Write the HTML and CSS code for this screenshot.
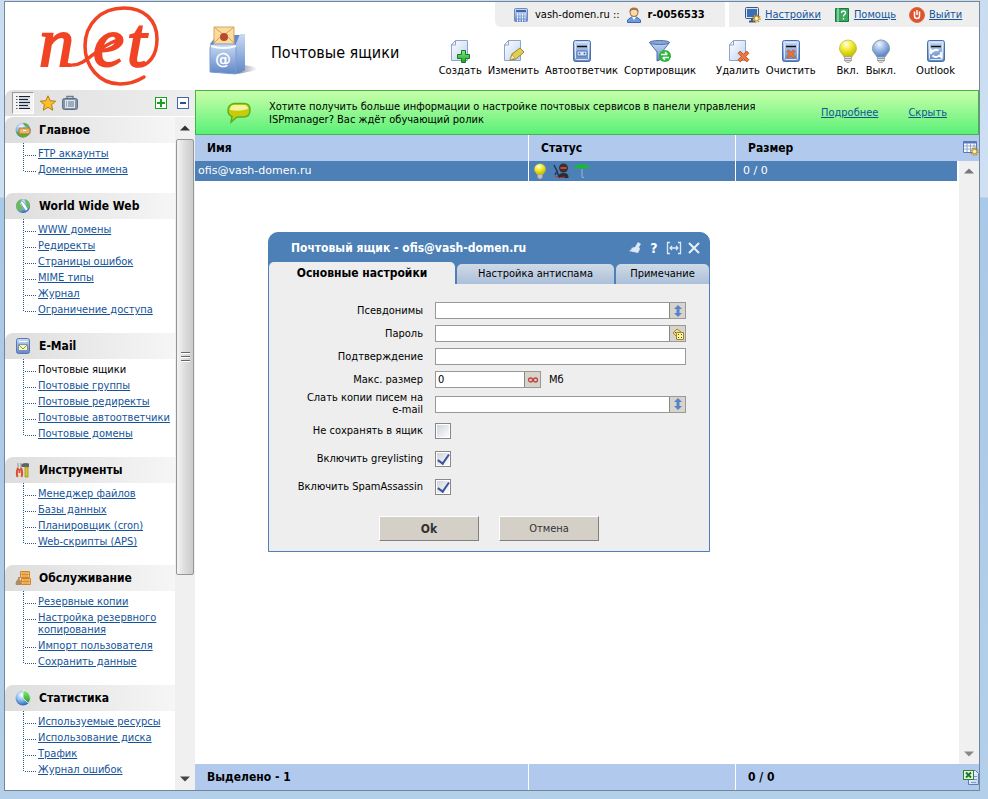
FILE: index.html
```html
<!DOCTYPE html>
<html lang="ru">
<head>
    <meta charset="UTF-8">
    <meta name="viewport" content="width=device-width, initial-scale=1.0">
    <title>Почтовые ящики</title>
    <link rel="stylesheet" href="styles.css">
</head>
<body>

<!-- shared icons -->
<svg class="sprite" width="0" height="0" aria-hidden="true">
    <defs>
        <linearGradient id="blue" x1="0" y1="0" x2="0" y2="1"><stop offset="0" stop-color="#c9dbf5"/><stop offset="1" stop-color="#5f86c6"/></linearGradient>
        <linearGradient id="paper" x1="0" y1="0" x2="1" y2="1"><stop offset="0" stop-color="#ffffff"/><stop offset="1" stop-color="#bcd2f0"/></linearGradient>
        <linearGradient id="green" x1="0" y1="0" x2="0" y2="1"><stop offset="0" stop-color="#8dea7c"/><stop offset="1" stop-color="#1d9c2c"/></linearGradient>
        <linearGradient id="shade" x1="0" y1="0" x2="1" y2="0"><stop offset="0" stop-color="#8a8f9c"/><stop offset="1" stop-color="#ffffff"/></linearGradient>
        <radialGradient id="yellow" cx=".4" cy=".25" r=".7"><stop offset="0" stop-color="#fffff0"/><stop offset=".45" stop-color="#f4ee3a"/><stop offset="1" stop-color="#c9bd00"/></radialGradient>
        <radialGradient id="bluebulb" cx=".4" cy=".25" r=".7"><stop offset="0" stop-color="#f2f7ff"/><stop offset=".45" stop-color="#a5c0ea"/><stop offset="1" stop-color="#5f86c4"/></radialGradient>
        <radialGradient id="globe" cx=".4" cy=".3" r=".7"><stop offset="0" stop-color="#ffffff"/><stop offset=".5" stop-color="#8dbcf0"/><stop offset="1" stop-color="#2f68b4"/></radialGradient>
    </defs>
    <symbol id="i-page" viewBox="0 0 24 24">
        <path d="M7.500 1.500H19.500V21.500H3.500V6z" fill="url(#paper)" stroke="#8ba5cf"/>
        <path d="M7.500 1.500V6H3.500z" fill="#fff" stroke="#8ba5cf"/>
    </symbol>
    <symbol id="i-box" viewBox="0 0 24 24">
        <rect x="3.500" y="1.500" width="17" height="21" rx="2" fill="url(#blue)" stroke="#4a6ea8"/>
        <rect x="5.500" y="3.500" width="13" height="17" rx="1" fill="none" stroke="#dbe7fa"/>
        <path d="M7 7.500H17" stroke="#111" stroke-width="1.500"/>
    </symbol>
    <symbol id="i-bulb" viewBox="0 0 24 24">
        <path d="M12 1a8.500 8.500 0 0 0-8.500 8.500c0 4 3 5 4.500 8.500h8c1.500-3.500 4.500-4.500 4.500-8.500A8.500 8.500 0 0 0 12 1z" fill="url(#yellow)" stroke="#b8b43a" stroke-width=".7"/>
        <path d="M8.500 17.500h7v4l-2 2h-3l-2-2z" fill="#e2e2e2" stroke="#8c8c8c" stroke-width=".6"/><path d="M8.500 19.500h7M8.500 21.500h7" stroke="#888" stroke-width=".8"/>
    </symbol>
    <symbol id="i-cross" viewBox="0 0 12 12">
        <path d="M3 1l3 3 3-3 2 2-3 3 3 3-2 2-3-3-3 3-2-2 3-3-3-3z" fill="#f07838" stroke="#b8431a" stroke-width=".8"/>
    </symbol>
    <symbol id="i-updown" viewBox="0 0 12 12">
        <path d="M6 0l4 4H7.500v4H10l-4 4-4-4h2.500V4H2z" fill="#5484cc"/>
    </symbol>
    <symbol id="i-gear" viewBox="0 0 10 10">
        <circle cx="5" cy="5" r="4" fill="none" stroke="#b98d25" stroke-width="1.600" stroke-dasharray="1.600 1.500"/>
        <circle cx="5" cy="5" r="2.700" fill="#f8df83" stroke="#b98d25"/><circle cx="5" cy="5" r="1" fill="#fff"/>
    </symbol>
</svg>

<div class="window">
    <header class="header">
        <a class="logo" href="#" aria-label="net">
            <svg width="124" height="84" viewBox="0 0 124 84">
                <text class="logo-text" x="2" y="62">n</text>
                <text class="logo-text" x="56" y="62">e</text>
                <text class="logo-text" x="90" y="62">t</text>
                <path d="M107 73C99 78 91 80 83 80 62 80 48 62 48 42 48 20 64 4 87 4c20 0 33 12 33 31 0 16-8 28-21 27M36 61c13 0 22-16 42-24" fill="none" stroke="#f04424" stroke-width="3.500" stroke-linecap="round"/>
            </svg>
        </a>
        <svg class="title-icon" width="48" height="52" viewBox="0 0 48 52">
            <path d="M29 48l19-4-2-3-11-2z" fill="url(#shade)"/>
            <path d="M1 18L8 9H36V44L28 48z" fill="#5f8bce"/>
            <path d="M26 20L31 8H36V44L27 48z" fill="url(#blue)"/>
            <path d="M5 1H25V20H5z" fill="#fbdc9c" stroke="#d9a45a"/>
            <path d="M5 1l10 8L25 1M5 17l8-8M25 17l-8-8" fill="none" stroke="#d9a45a"/>
            <circle cx="15" cy="11" r="4" fill="#b84a30"/>
            <path d="M1 22Q1 18 5 18H24Q27 18 27 22V48L1 46z" fill="url(#blue)" stroke="#7c9cd0"/>
            <path d="M2 20Q14 24 27 20" stroke="#fff" stroke-width="2" fill="none"/>
            <text class="at" x="14" y="39" text-anchor="middle">@</text>
        </svg>
        <h1>Почтовые ящики</h1>
        <div class="header-right">
            <div class="top-row">
                <div class="panel user">
                    <svg width="16" height="16" viewBox="0 0 16 16"><rect x="1.500" y="1.500" width="13" height="13" rx="1" fill="url(#blue)" stroke="#6a8cc4"/><rect x="3" y="3" width="10" height="2" fill="#47659a"/><path d="M4.500 6.500v8M7 6.500v8M9.500 6.500v8M12 6.500v8" stroke="#fff" stroke-dasharray="2 1"/></svg>
                    <span>vash-domen.ru ::</span>
                    <svg width="16" height="16" viewBox="0 0 16 16"><path d="M1.500 15.500V13l4-3h5l4 3v2.500z" fill="#6e9be0" stroke="#3d69ad"/><path d="M6 10l2 3 2-3z" fill="#fff"/><circle cx="8" cy="5.500" r="4" fill="#fbd9ae" stroke="#9a6c3c"/><path d="M3.500 5Q3 .5 8 .5T12.500 5L10 3H6z" fill="#a9743f"/></svg>
                    <b>r-0056533</b>
                </div>
                <nav class="panel links">
                    <svg width="16" height="16" viewBox="0 0 16 16"><rect x=".5" y=".5" width="13" height="11" rx="1" fill="#dce6f2" stroke="#3b5a82"/><rect x="2" y="2" width="10" height="8" fill="#3a6fb6"/><path d="M4 14.500h6M7 12v2" stroke="#3b5a82" stroke-width="2"/><use href="#i-gear" x="7" y="7" width="9" height="9"/></svg>
                    <a href="#">Настройки</a>
                    <svg width="16" height="16" viewBox="0 0 16 16"><path d="M1.500 1.500h13v13h-13z" fill="#3aa860" stroke="#167a3c"/><path d="M4 1v14" stroke="#c8efd2"/><path d="M7.500 6q0-2 2-2t2 2q0 1-1 1.500t-1 2M9.500 11v1.500" fill="none" stroke="#fff" stroke-width="1.300"/></svg>
                    <a href="#">Помощь</a>
                    <svg width="16" height="16" viewBox="0 0 16 16"><circle cx="8" cy="8" r="7.500" fill="#e4502c" stroke="#cf7340"/><path d="M5.500 4.500v4.500q0 2.500 2.500 2.500t2.500-2.500V4.500M8 3v5" fill="none" stroke="#fff" stroke-width="1.500"/></svg>
                    <a href="#">Выйти</a>
                </nav>
            </div>
            <div class="toolbar">
                <div class="tools">
                    <button type="button"><svg viewBox="0 0 24 24"><use href="#i-page"/><path d="M13.500 11.500h4v4h4v4h-4v4h-4v-4h-4v-4h4z" fill="url(#green)" stroke="#118022"/></svg>Создать</button>
                    <button type="button"><svg viewBox="0 0 24 24"><use href="#i-page"/><path d="M9 21l2-6 8-6 4 4-8 7z" fill="#e2cd50" stroke="#9c862a"/><path d="M9 21l2-5 3 3z" fill="#f6e8c0" stroke="#9c862a" stroke-width=".5"/></svg>Изменить</button>
                    <button type="button"><svg viewBox="0 0 24 24"><use href="#i-box"/><rect x="7" y="12" width="10" height="5" rx="1" fill="#dce8fa" stroke="#4a6ea8"/><circle cx="9.500" cy="14.500" r="1" fill="#4a6ea8"/><circle cx="14.500" cy="14.500" r="1" fill="#4a6ea8"/></svg>Автоответчик</button>
                    <button type="button"><svg viewBox="0 0 24 24"><path d="M1.500 3.500L9 13v9l5-2v-7l7.500-9.500z" fill="url(#blue)" stroke="#4e72ac"/><ellipse cx="11.500" cy="3.500" rx="10" ry="2" fill="#86a5d8" stroke="#4e72ac"/><circle cx="17" cy="17" r="6" fill="#27b83a"/><path d="M13 15.500h6M17 13l2.500 2.500M21 18.500h-6M17 21l-2.500-2.500" stroke="#fff" stroke-width="1.300"/></svg>Сортировщик</button>
                </div>
                <div class="tools">
                    <button type="button"><svg viewBox="0 0 24 24"><use href="#i-page"/><use href="#i-cross" x="11" y="11" width="13" height="13"/></svg>Удалить</button>
                    <button type="button"><svg viewBox="0 0 24 24"><use href="#i-box"/><use href="#i-cross" x="7" y="10" width="10" height="10"/></svg>Очистить</button>
                </div>
                <div class="tools">
                    <button type="button"><svg viewBox="0 0 24 24"><use href="#i-bulb"/></svg>Вкл.</button>
                    <button type="button"><svg viewBox="0 0 24 24"><use href="#i-bulb"/><path d="M12 1a8.500 8.500 0 0 0-8.500 8.500c0 4 3 5 4.500 8.500h8c1.500-3.500 4.500-4.500 4.500-8.500A8.500 8.500 0 0 0 12 1z" fill="url(#bluebulb)" stroke="#7d9bcd" stroke-width=".8"/></svg>Выкл.</button>
                </div>
                <div class="tools">
                    <button type="button"><svg viewBox="0 0 24 24"><use href="#i-box"/><path d="M7 15v-4l1.500 1.500q3-3 6-1M17 13v5l-1.500-1.500q-4 3-7 0" fill="none" stroke="#fff" stroke-width="1.800"/></svg>Outlook</button>
                </div>
            </div>
        </div>
    </header>

    <div class="content">
        <aside class="sidebar">
            <div class="side-tools">
                <button type="button" class="pressed" aria-label="Список"><svg width="16" height="16" viewBox="0 0 16 16"><path d="M4 1.500h11M4 4.500h9M4 7.500h11M4 10.500h9M4 13.500h11" stroke="#222"/><path d="M4 3h11M4 6h11M4 9h11M4 12h11" stroke="#9fb4d8"/><path d="M1 1.500h1.500M1 4.500h1.500M1 7.500h1.500M1 10.500h1.500M1 13.500h1.500" stroke="#555"/></svg></button>
                <button type="button" aria-label="Избранное"><svg width="18" height="16" viewBox="0 0 18 16"><path d="M9 .8l2.200 4.900 5.500.5-4.200 3.500 1.300 5.500L9 12.300l-4.800 2.900 1.300-5.500L1.300 6.200l5.500-.5z" fill="#f8c02c" stroke="#b87a10"/></svg></button>
                <button type="button" aria-label="Портфель"><svg width="16" height="16" viewBox="0 0 16 16"><path d="M5 4V1.500h6V4" fill="none" stroke="#6d7f96" stroke-width="1.500"/><rect x=".5" y="3.500" width="15" height="11" rx="2" fill="#8093ab" stroke="#5f7188"/><rect x="3" y="5" width="10" height="8" fill="#dfe6ee"/><path d="M4 7h1M6 7h6M4 9h1M6 9h6M4 11h1M6 11h6" stroke="#60718a"/></svg></button>
                <span class="spacer"></span>
                <button type="button" aria-label="Развернуть все"><svg width="12" height="12" viewBox="0 0 12 12"><rect x=".5" y=".5" width="11" height="11" fill="#fff" stroke="#18a020"/><path d="M6 2v8M2 6h8" stroke="#18a020" stroke-width="2"/></svg></button>
                <button type="button" aria-label="Свернуть все"><svg width="12" height="12" viewBox="0 0 12 12"><rect x=".5" y=".5" width="11" height="11" fill="#fff" stroke="#4468b0"/><path d="M3 6h6" stroke="#2c4f98" stroke-width="2"/></svg></button>
            </div>
            <div class="side-body">
                <nav class="menu">
                    <section>
                        <h2><svg width="16" height="16" viewBox="0 0 16 16"><circle cx="8" cy="8" r="7.500" fill="url(#globe)"/><path d="M1 10q3 5 7 5.500 5-.5 7-5.500zM8 1q5 0 6 4l-4-1z" fill="#5cb02c"/><rect x="4" y="6" width="11" height="6" rx="1" fill="#e8b66c" stroke="#a8702c"/><path d="M8 8.500h3" stroke="#fff"/></svg>Главное</h2>
                        <ul>
                            <li><a href="#">FTP аккаунты</a></li>
                            <li><a href="#">Доменные имена</a></li>
                        </ul>
                    </section>
                    <section>
                        <h2><svg width="16" height="16" viewBox="0 0 16 16"><circle cx="8" cy="8" r="7" fill="url(#globe)"/><path d="M1 7q1-5 6-6L5 6l3 3-2 5Q1 12 1 7zM10 1q5 2 5 7l-3 4-1-6z" fill="#6cb85c"/><path d="M5 4l2-1 3 3 3 5-2 2-3-4z" fill="#fff" stroke="#5f93c8" stroke-width=".7"/></svg>World Wide Web</h2>
                        <ul>
                            <li><a href="#">WWW домены</a></li>
                            <li><a href="#">Редиректы</a></li>
                            <li><a href="#">Страницы ошибок</a></li>
                            <li><a href="#">MIME типы</a></li>
                            <li><a href="#">Журнал</a></li>
                            <li><a href="#">Ограничение доступа</a></li>
                        </ul>
                    </section>
                    <section>
                        <h2><svg width="16" height="16" viewBox="0 0 16 16"><rect x="1.500" y=".5" width="13" height="15" rx="2" fill="url(#blue)" stroke="#5577b4"/><path d="M4 3.500h8" stroke="#fff"/><path d="M3.500 6.500h9v6h-9z" fill="#f6f4c0" stroke="#7b93b8"/><path d="M4 7l4 4 4-4" fill="none" stroke="#8c9a30"/></svg>E-Mail</h2>
                        <ul>
                            <li><span>Почтовые ящики</span></li>
                            <li><a href="#">Почтовые группы</a></li>
                            <li><a href="#">Почтовые редиректы</a></li>
                            <li><a href="#">Почтовые автоответчики</a></li>
                            <li><a href="#">Почтовые домены</a></li>
                        </ul>
                    </section>
                    <section>
                        <h2><svg width="16" height="16" viewBox="0 0 16 16"><path d="M3 1v6M6 1v6" stroke="#98a0a8" stroke-width="1.200"/><path d="M3 6q-2 4-.5 9M6 6q2 4 .5 9M4.500 7v4" fill="none" stroke="#e04c2c" stroke-width="2"/><path d="M6 3q2-3 8-1.500V5H7z" fill="#5c636c"/><path d="M10 5h3v10h-3z" fill="#d8c82c" stroke="#948414" stroke-width=".7"/></svg>Инструменты</h2>
                        <ul>
                            <li><a href="#">Менеджер файлов</a></li>
                            <li><a href="#">Базы данных</a></li>
                            <li><a href="#">Планировщик (cron)</a></li>
                            <li><a href="#">Web-скрипты (APS)</a></li>
                        </ul>
                    </section>
                    <section>
                        <h2><svg width="16" height="16" viewBox="0 0 16 16"><path d="M5.500 1.500h9v6h-9zM6.500 8.500h9v6h-9z" fill="#f9c46c" stroke="#cf842c"/><path d="M8 2v5M10 2v5M12 2v5M9 9v5M11 9v5M13 9v5M5 4.500h9M6 11.500h9" stroke="#cf842c" stroke-width=".7"/><path d="M3 7h2l-.5 2q3 3 1.500 6H1q-1.500-3 2-6z" fill="#b08a60"/></svg>Обслуживание</h2>
                        <ul>
                            <li><a href="#">Резервные копии</a></li>
                            <li><a href="#">Настройка резервного копирования</a></li>
                            <li><a href="#">Импорт пользователя</a></li>
                            <li><a href="#">Сохранить данные</a></li>
                        </ul>
                    </section>
                    <section>
                        <h2><svg width="16" height="16" viewBox="0 0 16 16"><circle cx="8" cy="8" r="7.500" fill="url(#globe)"/><path d="M8 8V.5A7.500 7.500 0 0 1 13.300 13.300z" fill="url(#green)" stroke="#fff" stroke-width=".7"/></svg>Статистика</h2>
                        <ul>
                            <li><a href="#">Используемые ресурсы</a></li>
                            <li><a href="#">Использование диска</a></li>
                            <li><a href="#">Трафик</a></li>
                            <li><a href="#">Журнал ошибок</a></li>
                        </ul>
                    </section>
                </nav>
                <div class="scrollbar">
                    <svg width="10" height="6" viewBox="0 0 10 6"><path d="M0 5.500L5 .5l5 5z" fill="#333"/></svg>
                    <div class="thumb"><i></i></div>
                    <svg width="10" height="6" viewBox="0 0 10 6"><path d="M0 .5h10l-5 5z" fill="#444"/></svg>
                </div>
            </div>
        </aside>

        <main class="main">
            <div class="banner">
                <svg width="24" height="22" viewBox="0 0 24 22"><path d="M7 1.500h10q6 0 6 6.500t-6 7H10l-6 5 1-5.500Q1 13 1 8t6-6.500z" fill="#c6cc0c" stroke="#5fae20" stroke-width="1.500"/><path d="M7 3h10q4 0 4 4-8 3-18 1 0-5 4-5z" fill="#f4f59a"/></svg>
                <p>Хотите получить больше информации о настройке почтовых сервисов в панели управления ISPmanager? Вас ждёт обучающий ролик</p>
                <a href="#">Подробнее</a>
                <a href="#">Скрыть</a>
            </div>
            <table class="list">
                <colgroup><col class="c-name"><col class="c-status"><col><col class="c-side"></colgroup>
                <thead>
                    <tr>
                        <th>Имя</th>
                        <th>Статус</th>
                        <th>Размер</th>
                        <td><svg width="16" height="16" viewBox="0 0 16 16"><path d="M.5 1.500h13v11H.5z" fill="#fff" stroke="#5878b8"/><path d="M0 2.500h14" stroke="#5878b8" stroke-width="2"/><path d="M4 3v9M7.500 3v9M11 3v9M1 6h12M1 9h12" stroke="#8ba5d4"/><use href="#i-gear" x="7" y="7" width="9" height="9"/></svg></td>
                    </tr>
                </thead>
                <tbody>
                    <tr class="selected">
                        <td>ofis@vash-domen.ru</td>
                        <td>
                            <div class="states">
                                <svg width="16" height="16" viewBox="0 0 24 24"><use href="#i-bulb"/></svg>
                                <svg width="16" height="16" viewBox="0 0 16 16"><path d="M1 2l3 6-2 4M4 8l2 6" fill="none" stroke="#26384e" stroke-width="1.500"/><circle cx="10.500" cy="5" r="4.500" fill="#333"/><path d="M7.500 4h6v2h-6z" fill="#e03c2c"/><path d="M5 15q0-5 5.500-5t5 5z" fill="#2c2c30"/><path d="M2 13q4 3 10 1" stroke="#b03c3c" fill="none"/></svg>
                                <svg width="16" height="16" viewBox="0 0 16 16"><path d="M0 6q1-5 8-5t8 5l-3-1-2.500 1L8 5 5.500 6 3 5z" fill="#20b43c"/><path d="M8 6v8q1 1.500 2 0" fill="none" stroke="#9cb8dc"/></svg>
                            </div>
                        </td>
                        <td>0 / 0</td>
                        <td class="track up"><svg width="10" height="6" viewBox="0 0 10 6"><path d="M0 5.500L5 .5l5 5z" fill="#777"/></svg></td>
                    </tr>
                    <tr class="rest">
                        <td colspan="3"></td>
                        <td class="track down"><svg width="10" height="6" viewBox="0 0 10 6"><path d="M0 .5h10l-5 5z" fill="#888"/></svg></td>
                    </tr>
                </tbody>
                <tfoot>
                    <tr>
                        <td>Выделено - 1</td>
                        <td></td>
                        <td>0 / 0</td>
                        <td><svg width="16" height="16" viewBox="0 0 16 16"><path d="M5.500 1.500h7l3 3v11h-10z" fill="url(#paper)" stroke="#5c7cb8"/><path d="M8 13.500h5M11 7.500h3M11 10.500h3" stroke="#7c98cc"/><rect x=".5" y="1.500" width="10" height="9" fill="#e4f2e0" stroke="#2c8430"/><path d="M3 3.500l5 5M8 3.500l-5 5" stroke="#1c7424" stroke-width="1.800"/></svg></td>
                    </tr>
                </tfoot>
            </table>
        </main>
    </div>

    <form class="dialog">
        <div class="dialog-title">
            <strong>Почтовый ящик - ofis@vash-domen.ru</strong>
            <button type="button" aria-label="Закрепить"><svg width="14" height="14" viewBox="0 0 14 14"><path d="M10 1l3 2-2 3 1 2-2 4-9-2 3-2-1-1 4-1z" fill="#dce8f6"/></svg></button>
            <button type="button" class="help" aria-label="Справка">?</button>
            <button type="button" aria-label="Ширина"><svg width="16" height="14" viewBox="0 0 16 14"><path d="M4 1.500H1.500v11H4M12 1.500h2.500v11H12M4 7h8M6 5L4 7l2 2M10 5l2 2-2 2" fill="none" stroke="#dce8f6" stroke-width="1.300"/></svg></button>
            <button type="button" aria-label="Закрыть"><svg width="14" height="14" viewBox="0 0 14 14"><path d="M2 2l10 10M12 2L2 12" stroke="#e8f0fa" stroke-width="2"/></svg></button>
        </div>
        <div class="tabs">
            <button type="button" class="tab active">Основные настройки</button>
            <button type="button" class="tab wide">Настройка антиспама</button>
            <button type="button" class="tab">Примечание</button>
        </div>
        <div class="dialog-body">
            <div class="row">
                <label for="aliases">Псевдонимы</label>
                <div class="field"><input type="text" id="aliases" autofocus><button type="button" aria-label="Развернуть"><svg width="12" height="12"><use href="#i-updown"/></svg></button></div>
            </div>
            <div class="row">
                <label for="password">Пароль</label>
                <div class="field"><input type="password" id="password"><button type="button" aria-label="Сгенерировать"><svg width="12" height="12" viewBox="0 0 12 12"><path d="M1 5l4-4 4 3-4 5z" fill="#f4e284" stroke="#9c8430"/><path d="M4.500 4.500h7v7h-7z" fill="#fbf2a0" stroke="#9c8430"/><path d="M6 6.500h1M9 6.500h1M6 9.500h1M9 9.500h1M3 4.500h1" stroke="#5c4c10"/></svg></button></div>
            </div>
            <div class="row">
                <label for="confirm">Подтверждение</label>
                <div class="field"><input type="password" id="confirm"></div>
            </div>
            <div class="row">
                <label for="quota">Макс. размер</label>
                <div class="field"><input type="text" id="quota" value="0"><button type="button" aria-label="Без ограничений"><svg width="12" height="12" viewBox="0 0 12 12"><circle cx="3.500" cy="6" r="2" fill="none" stroke="#c04444" stroke-width="1.300"/><circle cx="8.500" cy="6" r="2" fill="none" stroke="#c04444" stroke-width="1.300"/></svg></button></div>
                <span class="unit">Мб</span>
            </div>
            <div class="row copies">
                <label for="copies">Слать копии писем на e-mail</label>
                <div class="field"><input type="text" id="copies"><button type="button" aria-label="Развернуть"><svg width="12" height="12"><use href="#i-updown"/></svg></button></div>
            </div>
            <div class="row check">
                <label for="nosave">Не сохранять в ящик</label>
                <input type="checkbox" id="nosave">
            </div>
            <div class="row check">
                <label for="grey">Включить greylisting</label>
                <input type="checkbox" id="grey" checked>
            </div>
            <div class="row check">
                <label for="spam">Включить SpamAssassin</label>
                <input type="checkbox" id="spam" checked>
            </div>
            <div class="buttons">
                <button type="submit" class="ok">Ok</button>
                <button type="button">Отмена</button>
            </div>
        </div>
    </form>
</div>

</body>
</html>
```
FILE: styles.css
```css
* {
    box-sizing: border-box;
    margin: 0;
    padding: 0;
}
body {
    display: flex;
    min-height: 100vh;
    padding: 1px 8px 8px 4px;
    background: linear-gradient(#c9dcf0 0, #cfe0f3 197px, #a9c9e8 198px, #b3cfea 100%);
    font-family: "DejaVu Sans Condensed", "DejaVu Sans", sans-serif;
    font-size: 11px;
    line-height: 12px;
    color: #000;
}
button, input {
    font: inherit;
    color: inherit;
}
button {
    border: 0;
    background: none;
    cursor: pointer;
}
svg {
    display: block;
    flex: none;
}
a {
    color: #15549a;
}
.sprite {
    position: absolute;
}
.window {
    position: relative;
    flex: 1;
    display: flex;
    flex-direction: column;
    background: #fff;
    border: 1px solid #74869a;
}

/* header */
.header {
    display: flex;
    height: 88px;
}
.logo {
    width: 204px;
    padding: 2px 0 0 32px;
}
.logo svg {
    overflow: visible;
}
.logo-text {
    font-family: "Liberation Serif", serif;
    font-style: italic;
    font-size: 70px;
    fill: #f04424;
    stroke: #f04424;
    stroke-width: 2px;
}
.title-icon {
    margin-top: 24px;
}
.at {
    font-family: "DejaVu Sans", sans-serif;
    font-size: 16px;
    font-weight: bold;
    fill: #fff;
}
h1 {
    margin: 39px 0 0 14px;
    font-size: 16px;
    line-height: 24px;
    font-weight: normal;
    white-space: nowrap;
}
.header-right {
    flex: 1;
    display: flex;
    flex-direction: column;
    align-items: flex-end;
}
.top-row {
    display: flex;
    gap: 4px;
}
.panel {
    display: flex;
    align-items: center;
    gap: 5px;
    height: 25px;
    background: #eee;
}
.user {
    width: 230px;
    padding-left: 18px;
    gap: 6px;
    border-bottom-left-radius: 6px;
}
.links {
    width: 250px;
    padding-left: 16px;
    gap: 4px;
}
.links a + svg {
    margin-left: 9px;
}
.toolbar {
    display: flex;
    gap: 20px;
    padding: 12px 24px 0 0;
}
.tools {
    display: flex;
    gap: 6px;
}
.tools button {
    display: flex;
    flex-direction: column;
    align-items: center;
    gap: 2px;
    font-family: "DejaVu Sans", sans-serif;
    font-size: 10px;
}
.tools svg {
    width: 24px;
    height: 24px;
}

.content {
    flex: 1;
    display: flex;
}

/* left menu */
.sidebar {
    width: 190px;
    display: flex;
    flex-direction: column;
}
.side-tools {
    display: flex;
    align-items: center;
    gap: 5px;
    height: 26px;
    padding: 0 6px 0 7px;
    border-radius: 8px 0 0 0;
    background: linear-gradient(to right, #dfdfdf, #eee);
}
.side-tools .spacer {
    flex: 1;
}
.side-tools button:last-child {
    margin-left: 5px;
}
.side-tools .pressed {
    padding: 2px;
    border: 1px solid #999;
    border-right-color: #fff;
    border-bottom-color: #fff;
    background: #f4f4f4;
}
.side-body {
    flex: 1;
    display: flex;
    padding-top: 1px;
}
.menu {
    flex: 1;
}
.menu h2 {
    display: flex;
    align-items: center;
    gap: 8px;
    height: 26px;
    padding-left: 10px;
    border-top-left-radius: 8px;
    background: linear-gradient(to right, #ddd, #f6f6f6);
    font-size: 12px;
}
.menu ul {
    list-style: none;
    margin-bottom: 15px;
    padding-top: 3px;
    background: repeating-linear-gradient(#2a5a8a 0 1px, transparent 1px 2px) 18px 0 / 1px 3px no-repeat;
}
.menu section:last-child ul {
    margin-bottom: 0;
}
/* dotted tree lines: trunk and branch */
.menu li {
    padding: 2px 0 2px 33px;
    background:
        repeating-linear-gradient(#2a5a8a 0 1px, transparent 1px 2px) 18px 0 / 1px 100% no-repeat,
        repeating-linear-gradient(to right, #2a5a8a 0 1px, transparent 1px 2px) 20px 9px / 11px 1px no-repeat;
}
.menu li:last-child {
    background-size: 1px 10px, 11px 1px;
}
.scrollbar {
    width: 20px;
    display: flex;
    flex-direction: column;
    align-items: center;
    padding: 8px 1px;
    background: #f0f0f0;
}
.thumb {
    width: 18px;
    height: 436px;
    margin: 8px 0 auto;
    display: flex;
    align-items: center;
    justify-content: center;
    border: 1px solid #959595;
    border-radius: 2px;
    background: linear-gradient(to right, #f4f4f4, #dcdcdc 50%, #cbcbcf);
}
.thumb i {
    width: 9px;
    height: 10px;
    background: repeating-linear-gradient(#666 0 1px, #fff 1px 2px, transparent 2px 4px);
}

/* right side */
.main {
    flex: 1;
    display: flex;
    flex-direction: column;
}
.banner {
    display: flex;
    align-items: center;
    height: 45px;
    padding: 0 31px;
    border: 1px solid #46b446;
    background: linear-gradient(#c8ffa8, #5af078);
    line-height: 13px;
}
.banner p {
    width: 490px;
    margin: 0 auto 0 18px;
}
.banner a + a {
    margin-left: 30px;
}
.list {
    flex: 1;
    width: 100%;
    border-collapse: separate;
    border-spacing: 0;
    table-layout: fixed;
    text-align: left;
}
.c-name {
    width: 334px;
}
.c-status {
    width: 207px;
}
.c-side {
    width: 22px;
}
.list thead tr, .list tfoot tr {
    height: 26px;
    background: #b0c9ed;
    font-size: 12px;
    font-weight: bold;
}
.list th, .list tfoot td {
    padding-left: 12px;
}
.list thead td, .list tfoot td:last-child {
    padding-left: 6px;
}
.list th:nth-child(-n+2), .selected td:nth-child(-n+2), .list tfoot td:nth-child(-n+2) {
    border-right: 1px solid #fff;
}
.selected {
    height: 20px;
    font-family: "DejaVu Sans", sans-serif;
    color: #fff;
}
.selected td {
    padding-left: 3px;
    background: #4c80b6;
}
.selected td:nth-child(3) {
    padding-left: 7px;
}
.states {
    display: flex;
    gap: 5px;
}
.list .track {
    padding: 7px 5px;
    border-left: 2px solid #fff;
    background: #f0f0f0;
}
.track.up {
    vertical-align: top;
}
.track.down {
    vertical-align: bottom;
}

/* mailbox dialog */
.dialog {
    position: absolute;
    left: 263px;
    top: 230px;
    width: 442px;
    border: 1px solid #4c80b6;
    border-radius: 10px 10px 0 0;
    background: #4c80b6;
}
.dialog-title {
    display: flex;
    align-items: center;
    gap: 5px;
    height: 29px;
    padding: 0 8px 0 22px;
    color: #fff;
    font-size: 12px;
}
.dialog-title strong {
    flex: 1;
}
.help {
    width: 14px;
    font-size: 14px;
    font-weight: bold;
}
.tabs {
    display: flex;
    align-items: flex-end;
    gap: 2px;
}
.tab {
    height: 20px;
    flex: 93;
    border-radius: 5px 5px 0 0;
    background: linear-gradient(#d0dae6, #abc0da);
}
.tab.wide {
    flex: 157;
}
.tab.active {
    flex: 186;
    height: 22px;
    background: #eee;
    font-size: 12px;
    font-weight: bold;
}
.dialog-body {
    padding: 15px 23px 10px 0;
    background: #eee;
}
.row {
    display: grid;
    grid-template-columns: 154px 1fr;
    column-gap: 12px;
    align-items: center;
    height: 23px;
}
.row:has(.unit) {
    grid-template-columns: 154px 106px 1fr;
}
.row .unit {
    margin-left: -4px;
}
.row.copies {
    height: 26px;
}
.row.check {
    height: 28px;
}
.row label {
    text-align: right;
}
.copies label {
    padding-left: 34px;
}
.field {
    display: flex;
    height: 17px;
    border: 1px solid #999;
    background: #fff;
}
.field input {
    flex: 1;
    min-width: 0;
    padding-left: 2px;
    border: 0;
    outline: 0;
    background: none;
}
.field button {
    width: 16px;
    display: flex;
    align-items: center;
    justify-content: center;
    border-left: 1px solid #888;
    background: #d8d4cc;
}
.row input[type=checkbox] {
    appearance: none;
    width: 16px;
    height: 16px;
    border: 1px solid #888;
    outline: 1px solid #fff;
    outline-offset: -2px;
    background: linear-gradient(135deg, #ccd2da, #fff);
}
.row input:checked::before {
    content: "";
    display: block;
    width: 5px;
    height: 10px;
    margin: 0 auto;
    border: solid #3c5498;
    border-width: 0 2px 2px 0;
    transform: rotate(35deg);
}
.buttons {
    display: flex;
    gap: 20px;
    padding: 15px 0 0 110px;
}
.buttons button {
    width: 100px;
    height: 25px;
    border: 1px solid #fff;
    border-right-color: #808080;
    border-bottom-color: #808080;
    background: #d4d0c8;
    color: #333;
}
.buttons .ok {
    font-size: 12px;
    font-weight: bold;
}
```
